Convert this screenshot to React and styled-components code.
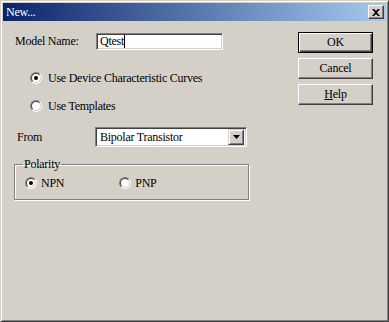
import React from 'react';
import styled, { createGlobalStyle } from 'styled-components';

const face = '#d4d0c8';
const shadow = '#808080';
const dark = '#404040';

const GlobalStyle = createGlobalStyle`
  html, body {
    margin: 0;
    padding: 0;
    background: ${face};
  }
  body {
    font-family: "Liberation Serif", "Times New Roman", serif;
    font-size: 12px;
    letter-spacing: -0.25px;
    color: #000;
  }
`;

const Window = styled.div`
  box-sizing: border-box;
  width: 389px;
  height: 322px;
  background: ${face};
  border: 1px solid;
  border-color: ${face} ${dark} ${dark} ${face};
  box-shadow: inset 1px 1px 0 #fff, inset -1px -1px 0 ${shadow};
  padding: 2px;
  display: flex;
  flex-direction: column;
`;

const TitleBar = styled.div`
  height: 18px;
  flex: none;
  display: flex;
  align-items: center;
  justify-content: space-between;
  padding: 0 2px 0 3px;
  background: linear-gradient(to right, #0a246a, #a6caf0);
`;

const Title = styled.span`
  color: #fff;
  font-size: 12px;
  line-height: 18px;
`;

const CloseButton = styled.div`
  box-sizing: border-box;
  width: 16px;
  height: 14px;
  display: flex;
  align-items: center;
  justify-content: center;
  background: ${face};
  border: 1px solid;
  border-color: #fff ${dark} ${dark} #fff;
  box-shadow: inset -1px -1px 0 ${shadow};
`;

const Body = styled.div`
  flex: 1;
  display: flex;
  justify-content: space-between;
  padding: 12px 13px 0 12px;
`;

const Left = styled.div`
  display: flex;
  flex-direction: column;
  width: 236px;
`;

const Row = styled.div`
  display: flex;
  align-items: center;
  height: ${p => p.$h || 14}px;
  margin-top: ${p => p.$mt || 0}px;
  padding-left: ${p => p.$pl || 0}px;
`;

const Label = styled.span`
  width: ${p => p.$w}px;
  flex: none;
`;

const TextBox = styled.div`
  box-sizing: border-box;
  width: 127px;
  height: 17px;
  background: #fff;
  border: 1px solid;
  border-color: ${shadow} #fff #fff ${shadow};
  box-shadow: inset 1px 1px 0 ${dark}, inset -1px -1px 0 ${face};
  padding: 0 3px;
  display: flex;
  align-items: center;
  line-height: 13px;
`;

const Caret = styled.span`
  display: inline-block;
  width: 1px;
  height: 13px;
  background: #000;
`;

const RadioCircle = styled.span`
  position: relative;
  box-sizing: border-box;
  width: 12px;
  height: 12px;
  flex: none;
  border-radius: 50%;
  border: 1px solid;
  border-color: ${shadow} #fff #fff ${shadow};
  display: flex;
  align-items: center;
  justify-content: center;
  margin-right: ${p => p.$gap || 6}px;
  &::before {
    content: '';
    box-sizing: border-box;
    width: 10px;
    height: 10px;
    border-radius: 50%;
    border: 1px solid;
    border-color: ${dark} ${face} ${face} ${dark};
    background: #fff;
  }
  &::after {
    content: '';
    position: absolute;
    width: 4px;
    height: 4px;
    border-radius: 50%;
    background: #000;
    display: ${p => (p.$on ? 'block' : 'none')};
  }
`;

const RadioLabel = styled.span`
  display: flex;
  align-items: center;
  flex: none;
`;

const Radio = ({ on, gap, children }) => (
  <RadioLabel>
    <RadioCircle $on={on} $gap={gap} />
    {children}
  </RadioLabel>
);

const Combo = styled.div`
  box-sizing: border-box;
  width: 152px;
  height: 20px;
  background: #fff;
  border: 1px solid;
  border-color: ${shadow} #fff #fff ${shadow};
  box-shadow: inset 1px 1px 0 ${dark}, inset -1px -1px 0 ${face};
  padding: 2px;
  display: flex;
  align-items: center;
  justify-content: space-between;
`;

const ComboText = styled.span`
  padding-left: 2px;
`;

const ComboArrow = styled.div`
  box-sizing: border-box;
  width: 16px;
  height: 16px;
  background: ${face};
  border: 1px solid;
  border-color: ${face} ${dark} ${dark} ${face};
  box-shadow: inset 1px 1px 0 #fff, inset -1px -1px 0 ${shadow};
  display: flex;
  align-items: center;
  justify-content: center;
`;

const Group = styled.fieldset`
  box-sizing: border-box;
  margin: 11px 0 0 -1px;
  width: 235px;
  height: 42px;
  padding: 0 0 0 10px;
  border: 1px solid ${shadow};
  box-shadow: 1px 1px 0 #fff, inset 1px 1px 0 #fff;
`;

const Legend = styled.legend`
  padding: 0 1px;
  margin-left: -2px;
  line-height: 12px;
`;

const Polarity = styled.div`
  display: flex;
  align-items: center;
  height: 14px;
  margin-top: 6px;
  gap: 55px;
`;

const Buttons = styled.div`
  display: flex;
  flex-direction: column;
  gap: 5px;
  margin-top: -1px;
`;

const Button = styled.div`
  box-sizing: border-box;
  width: 75px;
  height: 21px;
  display: flex;
  align-items: center;
  justify-content: center;
  background: ${face};
  border: 1px solid;
  border-color: ${p => (p.$default ? '#000' : `#fff ${dark} ${dark} #fff`)};
  box-shadow: ${p =>
    p.$default
      ? `inset 1px 1px 0 #fff, inset -1px -1px 0 ${dark}, inset -2px -2px 0 ${shadow}`
      : `inset -1px -1px 0 ${shadow}`};
  & u {
    text-decoration: underline;
  }
`;

export default function App() {
  return (
    <>
      <GlobalStyle />
      <Window>
        <TitleBar>
          <Title>New...</Title>
          <CloseButton>
            <svg width="8" height="7" viewBox="0 0 8 7">
              <path d="M0 0h2l2 2 2-2h2L5 3.5 8 7H6L4 5 2 7H0l3-3.5z" fill="#000" />
            </svg>
          </CloseButton>
        </TitleBar>
        <Body>
          <Left>
            <Row $h={17}>
              <Label $w={81}>Model Name:</Label>
              <TextBox>
                Qtest<Caret />
              </TextBox>
            </Row>
            <Row $mt={21} $pl={15}>
              <Radio on>Use Device Characteristic Curves</Radio>
            </Row>
            <Row $mt={14} $pl={15}>
              <Radio>Use Templates</Radio>
            </Row>
            <Row $h={20} $mt={14} $pl={2}>
              <Label $w={78}>From</Label>
              <Combo>
                <ComboText>Bipolar Transistor</ComboText>
                <ComboArrow>
                  <svg width="7" height="4" viewBox="0 0 7 4">
                    <path d="M0 0h7L3.5 4z" fill="#000" />
                  </svg>
                </ComboArrow>
              </Combo>
            </Row>
            <Group>
              <Legend>Polarity</Legend>
              <Polarity>
                <Radio on gap={4}>NPN</Radio>
                <Radio gap={4}>PNP</Radio>
              </Polarity>
            </Group>
          </Left>
          <Buttons>
            <Button $default>OK</Button>
            <Button>Cancel</Button>
            <Button>
              <span><u>H</u>elp</span>
            </Button>
          </Buttons>
        </Body>
      </Window>
    </>
  );
}
